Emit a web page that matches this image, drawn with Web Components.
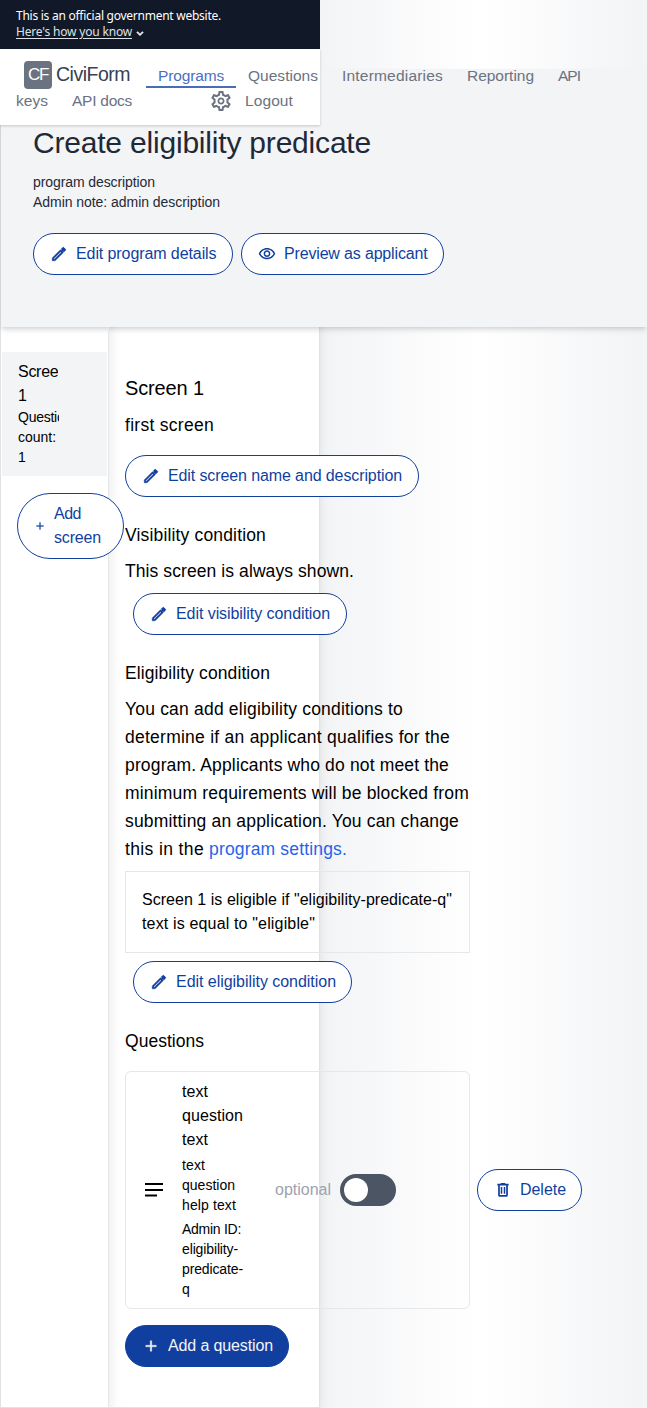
<!DOCTYPE html>
<html lang="en">
<head>
<meta charset="utf-8">
<title>Create eligibility predicate</title>
<style>
html{background:linear-gradient(to right,#f3f4f6,#fff,#f3f4f6) 0 0/320px 100% repeat-x;height:1408px;overflow:hidden}
body{margin:0;height:1408px;overflow:hidden;font:16px/24px "Liberation Sans",Arial,sans-serif;color:#000}
</style>
</head>
<body>
<admin-page></admin-page>
<script>
const define = (name, html, setup) => customElements.define(name, class extends HTMLElement {
  connectedCallback() {
    if (this.shadowRoot) return;
    const t = document.createElement('template');
    t.innerHTML = html;
    this.attachShadow({mode: 'open'}).appendChild(t.content.cloneNode(true));
    if (setup) setup(this, this.shadowRoot);
  }
});

/* One line of text, tracked out or in to the width given in "w". */
define('text-line', `<style>:host{display:block;white-space:nowrap}span{display:inline-block;text-decoration:var(--line,none);text-underline-offset:2px}</style><span><slot></slot></span>`, (el, root) => {
  const s = root.querySelector('span'), w = +el.getAttribute('w');
  if (!w) return;
  const n = el.textContent.length;
  s.style.letterSpacing = ((w - s.getBoundingClientRect().width) / n).toFixed(3) + 'px';
});

const icons = {
  edit: '<path d="M14.06 9.02l.92.92L5.92 19H5v-.92l9.06-9.06M17.66 3c-.25 0-.51.1-.7.29l-1.83 1.83 3.75 3.75 1.83-1.83c.39-.39.39-1.02 0-1.41l-2.34-2.34c-.2-.2-.45-.29-.71-.29zm-3.6 3.19L3 17.25V21h3.75L17.81 9.94l-3.75-3.75z" stroke="currentColor" stroke-width=".7"/><path d="M14.6 6.500L18.600 3.600 20.500 6 17.500 9.500z"/>',
  eye: '<path d="M12 6c3.79 0 7.17 2.13 8.82 5.5C19.17 14.87 15.79 17 12 17s-7.17-2.13-8.82-5.5C4.83 8.13 8.21 6 12 6m0-2C7 4 2.73 7.11 1 11.5 2.73 15.89 7 19 12 19s9.27-3.11 11-7.5C21.27 7.11 17 4 12 4zm0 5a2.5 2.5 0 0 1 0 5 2.5 2.5 0 0 1 0-5m0-2c-2.48 0-4.5 2.02-4.5 4.5S9.520 16 12 16s4.5-2.02 4.5-4.5S14.48 7 12 7z"/>',
  trash: '<path d="M15.5 3.500l-1-1h-5l-1 1H4.500v2.500h15V3.500zM5.500 6v13c0 1.1.9 2 2 2h9c1.1 0 2-.9 2-2V6h-2.300v12.800H7.800V6zM9 8h2v9H9zM13 8h2v9h-2z"/>',
  plus: '<path d="M11 5h2v6h6v2h-6v6h-2v-6H5v-2h6z" stroke="currentColor" stroke-width=".5"/>',
  subject: '<path d="M3 4.900h18v2.200H3zM3 10.900h18v2.200H3zM3 16.400h12v2.200H3z"/>',
  chevron: '<path d="M16.6 8.6L12 13.2 7.4 8.6 4.500 10.800 12 18l7.500-7.200z"/>',
  gear: '<path d="M19.43 12.98c.04-.32.07-.64.07-.98 0-.34-.03-.66-.07-.98l2.11-1.65c.19-.15.24-.42.12-.64l-2-3.46c-.09-.16-.26-.25-.44-.25-.06 0-.12.01-.17.03l-2.49 1c-.52-.4-1.08-.73-1.69-.98l-.38-2.65C14.46 2.18 14.25 2 14 2h-4c-.25 0-.46.18-.49.42l-.38 2.65c-.61.25-1.17.59-1.69.98l-2.49-1c-.06-.02-.12-.03-.18-.03-.17 0-.34.09-.43.25l-2 3.46c-.13.22-.07.49.12.64l2.11 1.65c-.04.32-.07.65-.07.98 0 .33.03.66.07.98l-2.11 1.65c-.19.15-.24.42-.12.64l2 3.46c.09.16.26.25.44.25.06 0 .12-.01.17-.03l2.49-1c.52.4 1.08.73 1.69.98l.38 2.65c.03.24.24.42.49.42h4c.25 0 .46-.18.49-.42l.38-2.65c.61-.25 1.17-.59 1.69-.98l2.49 1c.06.02.12.03.18.03.17 0 .34-.09.43-.25l2-3.46c.12-.22.07-.49-.12-.64l-2.11-1.65zm-1.98-1.71c.04.31.05.52.05.73 0 .21-.02.43-.05.73l-.14 1.13.89.7 1.08.84-.7 1.21-1.27-.51-1.04-.42-.9.68c-.43.32-.84.56-1.25.73l-1.06.43-.16 1.13-.2 1.35h-1.4l-.19-1.35-.16-1.13-1.06-.43c-.43-.18-.83-.41-1.23-.71l-.91-.7-1.06.43-1.27.51-.7-1.21 1.08-.84.89-.7-.14-1.13c-.03-.31-.05-.54-.05-.74s.02-.43.05-.73l.14-1.13-.89-.7-1.08-.84.7-1.21 1.27.51 1.04.42.9-.68c.43-.32.84-.56 1.25-.73l1.06-.43.16-1.13.2-1.35h1.39l.19 1.35.16 1.13 1.06.43c.43.18.83.41 1.23.71l.91.7 1.06-.43 1.27-.51.7 1.21-1.07.85-.89.7.14 1.13zM12 8.500c-1.930 0-3.500 1.570-3.500 3.500s1.570 3.500 3.500 3.500 3.500-1.570 3.500-3.500-1.570-3.500-3.500-3.500zm0 5.200c-.94 0-1.700-.76-1.700-1.700s.76-1.700 1.700-1.700 1.700.76 1.700 1.700-.76 1.700-1.700 1.700z"/>'
};
define('ui-icon', `<style>:host{display:block;flex:none;width:18px;height:18px}svg{display:block;width:100%;height:100%;fill:currentColor}</style><svg viewBox="0 0 24 24"></svg>`,
  (el, root) => { root.querySelector('svg').innerHTML = icons[el.getAttribute('name')]; });

define('pill-button', `<style>
:host{display:flex;box-sizing:border-box;width:fit-content;height:42px;border:1px solid #113f9f;border-radius:21px;background:#fff;color:#113f9f;align-items:center;padding:0 16px;gap:8px}
:host([primary]){background:#113f9f;color:#f3f4f6}
</style><ui-icon></ui-icon><slot></slot>`, (el, root) => {
  const i = document.createElement('ui-icon');
  i.setAttribute('name', el.getAttribute('icon'));
  root.querySelector('ui-icon').replaceWith(i);
});

define('gov-banner', `<style>
:host{display:block;height:49px;box-sizing:border-box;padding:8px 16px 0;background:#111827;color:#fff;font:12px/16px "Noto Sans","Open Sans",sans-serif;font-stretch:87.5%}
div{display:flex;gap:2px;color:#dfe1e6;align-items:center}
.u{--line:underline}
ui-icon{width:12px;height:12px;margin-top:2px}
</style><text-line w="205">This is an official government website.</text-line>
<div><text-line class="u" w="116">Here's how you know</text-line><ui-icon name="chevron"></ui-icon></div>`);

define('nav-bar', `<style>
:host{display:block;height:76px;box-sizing:border-box;padding-top:12px;background:#fff;color:#6b7280;font-size:15.500px;box-shadow:0 1px 3px rgba(0,0,0,.14),0 1px 2px rgba(0,0,0,.06)}
div{display:flex;height:28px}
.logo{width:28px;margin-left:24px;background:#6b7280;color:#fff;border-radius:4px;font-size:17px;line-height:28px;box-sizing:border-box;padding-left:4px}
.brand{font-size:19.500px;line-height:27px;color:#374151;width:74px;margin:0 16px 0 4px}
.row1{width:647px}
.row1 .tab{width:66px;height:25px;padding:0 12px;margin-right:12px;border-bottom:2px solid #4a6bb8;color:#4a6fc0;line-height:29px}
.n{line-height:29px;margin-right:24px}
.row2{height:24px;line-height:24px;padding-left:16px}
ui-icon{width:24px;height:24px;margin-left:77px;margin-right:12px}
</style>
<div class="row1"><div class="logo"><text-line w="20">CF</text-line></div><div class="brand"><text-line w="74">CiviForm</text-line></div><div class="tab"><text-line w="66">Programs</text-line></div><text-line class="n" w="70">Questions</text-line><text-line class="n" w="101">Intermediaries</text-line><text-line class="n" w="67">Reporting</text-line><text-line class="n" w="22">API</text-line></div>
<div class="row2"><text-line w="32" style="margin-right:24px">keys</text-line><text-line w="60">API docs</text-line><ui-icon name="gear"></ui-icon><text-line w="48">Logout</text-line></div>`);

define('program-header', `<style>
:host{display:block;position:relative;width:646px;height:258px;box-sizing:border-box;padding:56px 32px 0;background:#f3f4f6;color:#1f2937;box-shadow:0 4px 6px -1px rgba(0,0,0,.1),0 2px 4px -1px rgba(0,0,0,.1)}
h1{margin:0 0 11px;font-size:30px;line-height:36px;font-weight:400}
.d{font-size:14px;line-height:20px}
.b{display:flex;gap:8px;margin-top:21px}
</style><h1><text-line w="338">Create eligibility predicate</text-line></h1>
<div class="d"><text-line w="122">program description</text-line><text-line w="187">Admin note: admin description</text-line></div>
<div class="b"><pill-button icon="edit" style="width:200px"><text-line w="140.500">Edit program details</text-line></pill-button><pill-button icon="eye" style="width:203px"><text-line w="143.500">Preview as applicant</text-line></pill-button></div>`);

define('screen-list', `<style>
:host{display:block;width:108px;box-sizing:border-box;border-right:1px solid #e5e7eb;padding-top:25px}
.s{margin:0 1px;height:124px;box-sizing:border-box;padding:8px 16px;background:#f3f4f6}
.s div{width:41px;overflow:hidden;font-size:14px;line-height:20px}
.s .t{font-size:16px;line-height:24px;width:40px}
.s .t+div{margin-top:-1px}
.add{width:107px;height:66px;border-radius:33px;margin:17px 0 0 16px;padding-right:8px}
</style><div class="s"><div class="t"><text-line w="49">Screen</text-line><text-line>1</text-line></div><div><text-line w="54">Question</text-line><text-line w="38">count:</text-line><text-line>1</text-line></div></div>
<pill-button-tall class="add"></pill-button-tall>`);

define('pill-button-tall', `<style>
:host{display:flex;position:relative;box-sizing:border-box;border:1px solid #113f9f;background:#fff;color:#113f9f;align-items:center;padding-left:16px}
ui-icon{width:12px;height:12px;margin-right:8px}
</style><ui-icon name="plus"></ui-icon><div><text-line w="27">Add</text-line><text-line w="47">screen</text-line></div>`);

define('question-card', `<style>
:host{display:flex;align-items:center;box-sizing:border-box;width:345px;height:238px;border:1px solid #e5e7eb;border-radius:6px;padding:8px 0 8px 16px;position:relative}
ui-icon{width:24px;height:24px}
.t{width:62px;margin-left:16px}
.s{font-size:14px;line-height:20px;margin-top:4px;position:relative;top:-1px}
.o{color:#9ca3af;margin-left:32px}
.sw{flex:none;width:56px;height:32px;border-radius:16px;background:#4b5563;margin-left:9px;box-sizing:border-box;padding:4px}
.sw i{display:block;width:24px;height:24px;border-radius:50%;background:#fff}
pill-button{flex:none;margin-left:81px;width:105px}
</style><ui-icon name="subject"></ui-icon>
<div class="t"><text-line w="26">text</text-line><text-line w="61">question</text-line><text-line w="26">text</text-line>
<div class="s"><text-line w="23">text</text-line><text-line w="53">question</text-line><text-line w="54">help text</text-line></div>
<div class="s"><text-line w="59">Admin ID:</text-line><text-line w="56">eligibility-</text-line><text-line w="61">predicate-</text-line><text-line>q</text-line></div></div>
<text-line class="o" w="56">optional</text-line><div class="sw"><i></i></div>
<pill-button icon="trash"><text-line w="46">Delete</text-line></pill-button>`);

define('screen-detail', `<style>
:host{display:block;width:345px;padding:47px 0 0 16px;font-size:17.500px;line-height:28px}
.h{font-size:20px}
.box{box-sizing:border-box;height:82px;border:1px solid #e5e7eb;padding:16px;margin:8px 0;font-size:16px;line-height:24px}
pill-button{font-size:16px;line-height:24px}
.in{margin-left:8px}
.sec{margin:24px 0 8px}
.l{display:flex}
.l a{color:#2563eb;margin-left:5px}
question-card{font-size:16px;line-height:24px;margin:16px 0}
</style>
<text-line class="h" w="79">Screen 1</text-line>
<text-line w="89" style="margin:9px 0 16px">first screen</text-line>
<pill-button icon="edit" style="width:294px"><text-line w="234">Edit screen name and description</text-line></pill-button>
<text-line class="sec" w="141">Visibility condition</text-line>
<text-line w="229">This screen is always shown.</text-line>
<pill-button class="in" icon="edit" style="width:214px;margin-top:8px"><text-line w="154">Edit visibility condition</text-line></pill-button>
<text-line class="sec" w="145">Eligibility condition</text-line>
<text-line w="278">You can add eligibility conditions to</text-line>
<text-line w="325">determine if an applicant qualifies for the</text-line>
<text-line w="324">program. Applicants who do not meet the</text-line>
<text-line w="344">minimum requirements will be blocked from</text-line>
<text-line w="334">submitting an application. You can change</text-line>
<div class="l"><text-line w="79">this in the</text-line><a><text-line w="138">program settings.</text-line></a></div>
<div class="box"><text-line w="310">Screen 1 is eligible if "eligibility-predicate-q"</text-line><text-line w="173">text is equal to "eligible"</text-line></div>
<pill-button class="in" icon="edit" style="width:219px"><text-line w="160">Edit eligibility condition</text-line></pill-button>
<text-line class="sec" w="79" style="margin-bottom:0">Questions</text-line>
<question-card></question-card>
<pill-button primary icon="plus" style="width:164px"><text-line w="105">Add a question</text-line></pill-button>`);

define('admin-page', `<style>
:host{display:block;position:relative;height:1408px}
header{position:absolute;left:0;top:0;width:320px;z-index:2}
main{margin-top:69px;width:320px;height:1339px;box-sizing:border-box;border:1px solid #e0e2e6;border-top:0;background:#fff;box-shadow:0 10px 15px -3px rgba(0,0,0,.1),0 4px 6px -2px rgba(0,0,0,.05)}
.flow{display:flow-root}
.cols{display:flex;height:1080px}
screen-list{flex:none;position:relative;z-index:1}
section{flex:none;width:210px;box-shadow:inset 12px 0 12px -10px rgba(0,0,0,.08)}
program-header{z-index:1}
</style><header><gov-banner></gov-banner><nav-bar></nav-bar></header>
<div class="flow"><main><program-header></program-header><div class="cols"><screen-list></screen-list><section><screen-detail></screen-detail></section></div></main></div>`);
</script>
</body>
</html>
